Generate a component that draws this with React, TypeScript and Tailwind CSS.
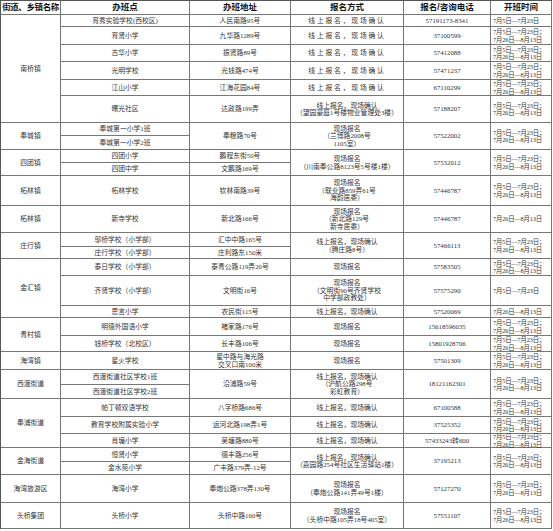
const T2 = ['7月5日—7月23日；', '7月26日—8月13日'];
const ONLINE = '线上报名，现场确认';

const spanCls: Record<number, string> = {
  1: '',
  2: 'row-span-2',
  3: 'row-span-3',
  6: 'row-span-6',
};

type C = { v: string | string[]; span?: number; track?: boolean };

const c = (v: string | string[], span = 1, track = false): C => ({ v, span, track });

const headers = ['街道、乡镇名称', '办班点', '办班地址', '报名方式', '报名/咨询电话', '开班时间'];

// cells listed in row order; grid auto-placement skips spanned slots like a table
const rows: C[][] = [
  [c('南桥镇', 6), c('育秀实验学校(西校区)'), c('人民南路95号'), c(ONLINE, 1, true), c('57191173-8341'), c('7月5日—7月23日')],
  [c('育贤小学'), c('九华路1289号'), c(ONLINE, 1, true), c('37100599'), c(T2)],
  [c('古华小学'), c('振贤路89号'), c(ONLINE, 1, true), c('57412088'), c(T2)],
  [c('光明学校'), c('光钱路474号'), c(ONLINE, 1, true), c('57471237'), c(T2)],
  [c('江山小学'), c('江海花园84号'), c(ONLINE, 1, true), c('67110299'), c(T2)],
  [c('曙光社区'), c('达政路199弄'), c([ONLINE, '（望园豪庭1号楼物业管理处3楼）']), c('57188207'), c(T2)],
  [c('奉城镇', 2), c('奉城第一小学1班'), c('奉粮路70号', 2), c(['现场报名', '（兰博路2008号', '1105室）'], 2), c('57522002', 2), c(T2, 2)],
  [c('奉城第一小学2班')],
  [c('四团镇', 2), c('四团小学'), c('鹏程东街50号'), c(['现场报名', '（川南奉公路8123号5号楼1楼）'], 2), c('57532012', 2), c(T2, 2)],
  [c('四团中学'), c('文鹏路169号')],
  [c('柘林镇'), c('柘林学校'), c('钦林南路39号'), c(['现场报名', '（联业路859弄61号', '海韵居委）']), c('57446787'), c(T2)],
  [c('柘林镇'), c('新寺学校'), c('新北路166号'), c(['现场报名', '（新北路129号', '新寺居委）']), c('57446787'), c('7月26日—8月13日')],
  [c('庄行镇', 2), c('邬桥学校（小学部）'), c('汇中中路165号'), c([ONLINE, '（腾庄路8号）'], 2), c('57466113', 2), c(T2, 2)],
  [c('庄行学校（小学部）'), c('庄利路东150米')],
  [c('金汇镇', 3), c('泰日学校（小学部）'), c('泰青公路119弄20号'), c('现场报名'), c('57583505'), c(T2)],
  [c('齐贤学校（小学部）'), c('文明街16号'), c(['现场报名', '（文明街90号齐贤学校', '中学部政教处）']), c('57575290'), c('7月5日—7月23日')],
  [c('思言小学'), c('农民街115号'), c(ONLINE), c('57520069'), c('7月26日—8月13日')],
  [c('青村镇', 2), c('明德外国语小学'), c('褚家路176号'), c('现场报名'), c('15618596035'), c(T2)],
  [c('钱桥学校（北校区）'), c('长丰路106号'), c('现场报名'), c('15801928706'), c(T2)],
  [c('海湾镇'), c('星火学校'), c(['星中路与海光路', '交叉口南100米']), c('现场报名'), c('57501309'), c(T2)],
  [c('西渡街道', 2), c('西渡街道社区学校1班'), c('沿浦路59号', 2), c([ONLINE, '（沪航公路298号', '彩虹教育）'], 2), c('18121162301', 2), c(T2, 2)],
  [c('西渡街道社区学校2班')],
  [c('奉浦街道', 3), c('帕丁顿双语学校'), c('八字桥路686号'), c(ONLINE), c('67100588'), c(T2)],
  [c('教育学校附属实验小学'), c('运河北路198弄1号'), c(ONLINE), c('37525352'), c(T2)],
  [c('肖塘小学'), c('吴塘路880号'), c(ONLINE), c('57433243转600'), c(T2)],
  [c('金海街道', 2), c('恒贤小学'), c('德丰路256号'), c([ONLINE, '（嘉园路254号社区生活驿站1楼）'], 2), c('37195213', 2), c(T2, 2)],
  [c('金水苑小学'), c('广丰路379弄-12号')],
  [c('海湾旅游区'), c('海湾小学'), c('奉炮公路378弄130号'), c(['现场报名', '（奉炮公路141弄49号1楼）']), c('57127270'), c(T2)],
  [c('头桥集团'), c('头桥小学'), c('头桥中路160号'), c(['现场报名', '（头桥中路105弄18号405室）']), c('57551107'), c(T2)],
];

function Cell({ cell }: { cell: C }) {
  const lines = Array.isArray(cell.v) ? cell.v : [cell.v];
  const isTime = lines.some((l) => l.includes('日—'));
  return (
    <div
      className={`${spanCls[cell.span ?? 1]} flex flex-col justify-center border-b border-r border-[#777] whitespace-nowrap ${
        isTime ? 'items-start pl-[2px] text-left text-[6.4px] tracking-[-0.2px]' : 'items-center text-center'
      } ${cell.track ? 'tracking-[1.8px]' : ''}`}
    >
      {lines.map((l, i) => (
        <span key={i}>{l}</span>
      ))}
    </div>
  );
}

export default function App() {
  return (
    <div className="min-h-screen bg-white">
      <div className="grid w-max grid-cols-[60px_129px_101px_113px_87px_61px] grid-rows-[14px_12px_18px_17px_18px_16px_27px_13px_14px_13px_13px_30px_27px_14px_12px_17px_30px_12px_18px_16px_18px_15px_14px_18px_17px_14px_14px_13px_28px_26px] border-l border-t border-[#555] font-['Liberation_Serif','Noto_Sans_CJK_SC',serif] text-[6.8px] leading-[7.5px] text-[#333]">
        {headers.map((h, i) => (
          <div
            key={h}
            className={`flex items-center justify-center border-b border-r border-[#777] font-['Liberation_Sans','Noto_Sans_CJK_SC',sans-serif] text-[8.5px] font-bold whitespace-nowrap text-[#111] ${i === 0 ? 'tracking-[-0.4px]' : ''}`}
          >
            {h}
          </div>
        ))}
        {rows.flat().map((cell, i) => (
          <Cell key={i} cell={cell} />
        ))}
      </div>
    </div>
  );
}
